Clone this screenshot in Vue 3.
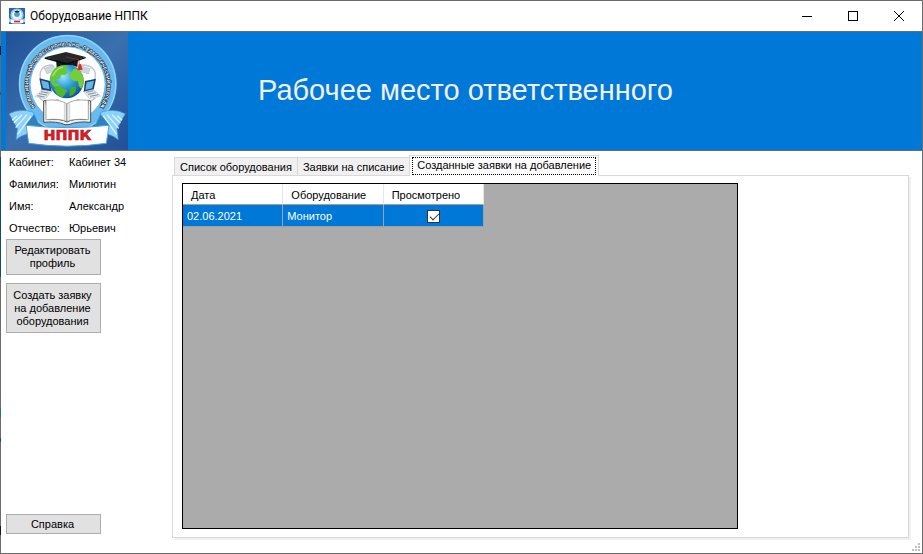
<script setup>
import { ref } from 'vue'

const profile = [
  { label: 'Кабинет:', value: 'Кабинет 34' },
  { label: 'Фамилия:', value: 'Милютин' },
  { label: 'Имя:', value: 'Александр' },
  { label: 'Отчество:', value: 'Юрьевич' }
]
const tabs = ['Список оборудования', 'Заявки на списание', 'Созданные заявки на добавление']
const activeTab = ref(2)
const requests = ref([{ date: '02.06.2021', item: 'Монитор', viewed: true }])
</script>

<template>
  <div class="window">
    <header class="titlebar">
      <svg class="app-icon" viewBox="0 0 16 16" aria-hidden="true">
        <rect width="16" height="16" fill="#2c62a8" />
        <circle cx="8" cy="7" r="6.6" fill="#8fd0f5" />
        <circle cx="8" cy="7" r="4.8" fill="#fff" />
        <circle cx="8" cy="6.4" r="2.8" fill="#4b9fd0" />
        <path d="M5 3.4l3-1 3 1-3 1.4z" fill="#222" />
        <path d="M4 8l4 1 4-1v3H4z" fill="#e9eff2" />
        <path d="M0 10l3 2h10l3-2v4l-3 1H3l-3-1z" fill="#9fd8f8" />
        <path d="M2 11.6q6 1 12 0v3.4q-6 1-12 0z" fill="#fff" />
        <path d="M5 13.5h6" stroke="#d32730" stroke-width="1.8" />
      </svg>
      <span class="caption">Оборудование НППК</span>
      <button class="win-btn" aria-label="Свернуть">
        <svg viewBox="0 0 10 10" shape-rendering="crispEdges"><path d="M0 5.5h10" /></svg>
      </button>
      <button class="win-btn" aria-label="Развернуть">
        <svg viewBox="0 0 10 10" shape-rendering="crispEdges"><path d="M.5.5h9v9h-9z" /></svg>
      </button>
      <button class="win-btn" aria-label="Закрыть">
        <svg viewBox="0 0 10 10"><path d="M0 0l10 10M10 0L0 10" /></svg>
      </button>
    </header>

    <div class="banner">
      <svg class="logo" viewBox="18 12 366 354" preserveAspectRatio="none" role="img" aria-label="НППК">
        <defs>
          <linearGradient id="sky" x1="0" y1="0" x2="1" y2="1">
            <stop offset="0" stop-color="#1f5296" />
            <stop offset=".5" stop-color="#3b70af" />
            <stop offset="1" stop-color="#205099" />
          </linearGradient>
          <radialGradient id="sea" cx=".4" cy=".35" r=".7">
            <stop offset="0" stop-color="#9be4fb" />
            <stop offset=".5" stop-color="#279ada" />
            <stop offset="1" stop-color="#0a4d91" />
          </radialGradient>
          <path id="arc" d="M122 257A118 118 0 1 1 284 257" />
        </defs>
        <rect x="18" y="12" width="366" height="354" fill="url(#sky)" />
        <circle cx="203" cy="167" r="147" fill="#68baf0" />
        <circle cx="203" cy="167" r="144" fill="none" stroke="#92d5fb" stroke-width="4" />
        <circle cx="203" cy="169" r="111" fill="#fff" />
        <text class="ring"><textPath href="#arc" startOffset="50%" text-anchor="middle">НОВОСИБИРСКИЙ ПРОФЕССИОНАЛЬНО - ПЕДАГОГИЧЕСКИЙ КОЛЛЕДЖ</textPath></text>

        <g fill="none" stroke="#bcc8ce" stroke-width="4">
          <path d="M158 111Q109 112 124 162M244 111Q299 112 282 162M118 209Q139 231 176 214M286 209Q264 231 230 214" />
        </g>
        <path d="M133 121l28-9 5 16-25 9z" fill="#cfd7dc" stroke="#8b989f" />
        <path d="M243 114l27 8-5 16-26-8z" fill="#cfd7dc" stroke="#8b989f" />
        <path d="M118 151l32 8 5 32-30-5z" fill="#1c3e68" />
        <path d="M123 157l22 6 4 21-20-4z" fill="#63b9e6" />
        <path d="M126 185l29 5-18 22-33-6z" fill="#e2e8ed" stroke="#8294a4" />
        <path d="M112 203l22 4M117 197l24 4M123 191l23 4" stroke="#526477" stroke-width="2" />
        <path d="M255 159l33-7-7 33-30 7z" fill="#1c3e68" />
        <path d="M260 163l22-5-5 23-21 5z" fill="#63b9e6" />
        <path d="M251 191l29-7 22 20-34 8z" fill="#e2e8ed" stroke="#8294a4" />
        <path d="M259 193l21-5M264 199l23-5M270 205l25-5" stroke="#526477" stroke-width="2" />

        <circle cx="200" cy="160" r="51" fill="url(#sea)" />
        <path d="M153 138l16-22 28-4 8 6-10 8 9 7-9 8-12-1-4 13-11-1-5 9 13 7 9 13-7 4-19-12-9-16z" fill="#69c832" />
        <path d="M167 174l16 1 11 9 8 3-8 13-7 9-15-9-9-15z" fill="#4eb72d" />
        <path d="M213 133l12-13 15 8 10 19 1 20-7 15-8-8-2-14-14-2-12-10 2-9z" fill="#75ce38" />
        <path d="M211 177l17-1-1 15-9 11-10 2z" fill="#45ab2b" />
        <path d="M158 145q10-24 31-28" fill="none" stroke="#c6ee94" stroke-width="4" opacity=".7" />

        <path d="M168 94l2 23q30-14 62 0l2-22-34 11z" fill="#171a1d" />
        <path d="M134 88l64-16 59 15-57 19z" fill="#24282b" />
        <path d="M134 88l66 16 57-17v4l-57 19-66-18z" fill="#0b0c0d" />
        <path d="M198 87l38 8 3 21" fill="none" stroke="#b92c2c" stroke-width="2" />
        <path d="M236 109l7-1 5 18h-16z" fill="#d23431" />

        <path d="M131 219l6-2 9 58q36-4 55 7 18-11 55-7l9-58 7 2v64q-41-4-65 7h-12q-25-11-64-7z" fill="#eceeed" stroke="#4c504f" stroke-width="3" />
        <path d="M138 217q39-5 62 10v53q-21-9-62-5z" fill="#fff" stroke="#777c7d" stroke-width="2" />
        <path d="M201 227q22-15 64-10v58q-41-4-64 5z" fill="#fff" stroke="#777c7d" stroke-width="2" />
        <path d="M194 226v50M208 226v50" stroke="#d3d6d6" stroke-width="5" />

        <path d="M27 257q35-17 72-5l20 44v22q-38-8-71 17l4-33z" fill="#8bd1fa" stroke="#3e91ce" stroke-width="2" />
        <path d="M376 257q-35-17-72-5l-20 44v22q38-8 71 17l-4-33z" fill="#8bd1fa" stroke="#3e91ce" stroke-width="2" />
        <path d="M51 263l-14 14M66 260l-24 24M81 260l-34 39M93 264l-40 55M352 263l14 14M336 260l25 25M321 260l35 41M310 264l40 55" stroke="#dff3ff" stroke-width="4" />
        <path d="M76 293l26-34 18 39z" fill="#2f81be" />
        <path d="M329 293l-27-34-18 39z" fill="#2f81be" />
        <path d="M78 292q124 14 249 0l-8 54q-117 17-233 0z" fill="#fff" stroke="#4aa2df" stroke-width="3" />
        <text class="ribbon" x="202" y="337" text-anchor="middle">НППК</text>
      </svg>
      <h1>Рабочее место ответственного</h1>
    </div>

    <main class="content">
      <aside class="sidebar">
        <dl class="profile">
          <div v-for="row in profile" :key="row.label" class="profile-row">
            <dt>{{ row.label }}</dt>
            <dd>{{ row.value }}</dd>
          </div>
        </dl>
        <button class="btn tall">Редактировать профиль</button>
        <button class="btn taller">Создать заявку на добавление оборудования</button>
        <button class="btn help">Справка</button>
      </aside>

      <section class="tabs">
        <div class="tab-strip" role="tablist">
          <button
            v-for="(tab, i) in tabs"
            :key="tab"
            role="tab"
            class="tab"
            :class="{ active: i === activeTab }"
            :aria-selected="i === activeTab"
            @click="activeTab = i"
          ><span>{{ tab }}</span></button>
        </div>
        <div class="panel" role="tabpanel">
          <div class="grid-area">
            <table>
              <thead>
                <tr><th>Дата</th><th>Оборудование</th><th>Просмотрено</th></tr>
              </thead>
              <tbody>
                <tr v-for="r in requests" :key="r.date">
                  <td>{{ r.date }}</td>
                  <td>{{ r.item }}</td>
                  <td class="check"><input v-model="r.viewed" type="checkbox" aria-label="Просмотрено"></td>
                </tr>
              </tbody>
            </table>
          </div>
        </div>
      </section>
    </main>
    <svg class="grip" viewBox="0 0 8 8" shape-rendering="crispEdges" aria-hidden="true">
      <path d="M6 0h2v2H6zM3 3h2v2H3zM6 3h2v2H6zM0 6h2v2H0zM3 6h2v2H3zM6 6h2v2H6z" fill="#bfbfbf" />
    </svg>
  </div>
</template>

<style>
body { background: #fff; }
</style>

<style scoped>
* { box-sizing: border-box; }
.window {
  position: relative;
  display: flex;
  flex-direction: column;
  min-height: 100vh;
  border: 1px solid #6b6b6b;
  background: #fff;
  color: #000;
  font-family: "Liberation Sans", Arial, sans-serif;
  font-size: 11px;
  line-height: 13px;
}
/* desktop showing through the translucent left frame edge */
.window::before {
  content: "";
  position: absolute;
  left: -1px;
  top: -1px;
  bottom: -1px;
  width: 1px;
  background: linear-gradient(
    #6b6b6b 46px, #111 46px 55px, #6b6b6b 55px 92px, #6b452c 92px 95px, #6b6b6b 95px 157px,
    #174672 157px 277px, #6b6b6b 277px 408px, #2b7282 408px 417px, #6b6b6b 417px 438px,
    #234673 438px 442px, #6b6b6b 442px 526px, #1c1410 526px 535px, #6b6b6b 535px
  );
}
button { font: inherit; color: inherit; }
.titlebar {
  display: flex;
  align-items: center;
  height: 31px;
  padding-left: 8px;
  border-bottom: 1px solid #6b6b6b;
}
.app-icon { width: 16px; height: 16px; }
.caption {
  flex: 1;
  margin-left: 5px;
  font-family: Roboto, "Open Sans", sans-serif;
  font-size: 12px;
  line-height: 16px;
}
.win-btn {
  display: flex;
  align-items: center;
  justify-content: center;
  width: 46px;
  height: 28px;
  padding: 0;
  border: 0;
  background: none;
}
.win-btn svg { width: 10px; height: 10px; fill: none; stroke: #000; overflow: visible; }
.banner {
  display: flex;
  align-items: center;
  height: 119px;
  padding-left: 5px;
  border-bottom: 1px solid #6b6b6b;
  background: #0078d7;
}
.logo { flex: none; width: 122px; height: 118px; }
.ring {
  font-size: 14px;
  font-weight: bold;
  fill: #fff;
  stroke: #123;
  stroke-width: 3px;
  paint-order: stroke;
}
.ribbon {
  font-family: "DejaVu Sans", sans-serif;
  font-size: 43px;
  font-weight: bold;
  fill: #d92027;
  stroke: #b3151c;
  stroke-width: 2px;
}
h1 {
  margin: 0 0 2px 130px;
  color: #f0f0f0;
  font-size: 29px;
  font-weight: normal;
  line-height: 34px;
}
.content { flex: 1; display: flex; padding: 4px 13px 15px 5px; }
.sidebar { display: flex; flex-direction: column; align-items: flex-start; width: 166px; }
.profile { margin: 0 0 0 3px; }
.profile-row { display: flex; height: 22px; line-height: 14px; }
.profile-row:last-child { height: 18px; }
dt { width: 60px; }
dd { margin: 0; }
.btn {
  width: 95px;
  padding: 0 5px 0 3px;
  border: 1px solid #adadad;
  background: #e1e1e1;
}
.tall { height: 36px; }
.taller { height: 50px; margin-top: 8px; }
.help { height: 20px; margin-top: auto; margin-bottom: 4px; }
.tabs { flex: 1; display: flex; flex-direction: column; }
.tab-strip { display: flex; align-items: flex-end; height: 20px; padding-left: 2px; }
.tab {
  height: 18px;
  padding: 1px 5px 0;
  border: 1px solid #d9d9d9;
  border-right: 0;
  border-bottom: 0;
  background: #f0f0f0;
  white-space: nowrap;
}
.tab.active {
  position: relative;
  z-index: 1;
  height: 21px;
  margin-bottom: -1px;
  padding: 0 2px;
  border-right: 1px solid #d9d9d9;
  background: #fff;
}
.tab.active span { display: block; padding: 1px 4px 2px; border: 1px dotted #000; }
.panel {
  flex: 1;
  display: flex;
  padding: 7px 170px 8px 9px;
  border: 1px solid #d9d9d9;
  box-shadow: 2px 2px #f0f0f0;
}
.grid-area { flex: 1; border: 1px solid #000; background: #ababab; }
table { width: 301px; border-collapse: separate; border-spacing: 0; table-layout: fixed; }
th {
  height: 21px;
  padding: 2px 8px 0;
  border-right: 1px solid #e5e5e5;
  border-bottom: 1px solid #a0a0a0;
  background: #fff;
  font-weight: normal;
  text-align: left;
}
td {
  height: 22px;
  padding: 1px 4px 0;
  border-right: 1px solid #a0a0a0;
  border-bottom: 1px solid #a0a0a0;
  background: #0078d7;
  color: #fff;
}
.check { text-align: center; }
.check input {
  appearance: none;
  display: block;
  width: 13px;
  height: 13px;
  margin: 0 auto;
  border: 1px solid #333;
  background: #fff;
}
.check input:checked::before {
  content: "";
  display: block;
  width: 8px;
  height: 4px;
  margin: 2px 0 0 2px;
  border: solid #333;
  border-width: 0 0 1px 1px;
  transform: rotate(-45deg);
}
.grip { position: absolute; right: 2px; bottom: 2px; width: 8px; height: 8px; }
</style>
